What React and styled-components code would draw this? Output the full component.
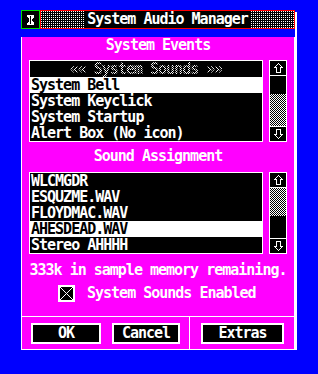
import React from 'react'
import styled, { createGlobalStyle } from 'styled-components'

const GlobalStyle = createGlobalStyle`
  html, body {
    margin: 0;
    padding: 0;
    background: #0000ff;
  }
  body {
    font-family: "DejaVu Sans Mono", "Liberation Mono", monospace;
    font-weight: bold;
    font-size: 15px;
    letter-spacing: -1px;
    color: #fff;
  }
`;

const dots = `
  background-color: #fff;
  background-image:
    linear-gradient(90deg, transparent 1px, #000 1px),
    linear-gradient(transparent 1px, #000 1px);
  background-size: 2px 2px;
`;

const checker = `repeating-conic-gradient(#fff 0 25%, #000 0 50%) 0 0 / 2px 2px`;

const Window = styled.div`
    width: 274px;
    margin: 10px 0 0 21px;
    box-shadow: 2px 2px 0 #fff;
`;

const TitleBar = styled.div`
    display: flex;
    height: 19px;
`;

const CloseBox = styled.div`
    width: 19px;
    box-sizing: border-box;
    border: 1px solid #00e000;
    background: #000;
    display: flex;
    align-items: center;
    justify-content: center;
`;

const TitleBox = styled.div`
    flex: 1;
    box-sizing: border-box;
    border: 1px solid #ff0000;
    ${dots}
    display: flex;
    align-items: center;
    justify-content: center;
`;

const TitleText = styled.span`
    background: #000;
    padding: 0 2px;
    line-height: 17px;
`;

const Body = styled.div`
    background: #ff00ff;
    border: 1px solid #fff;
    border-top: none;
`;

const Content = styled.div`
    padding: 0 7px;
`;

const Heading = styled.div`
    text-align: center;
    line-height: 16px;
    margin-top: ${({ $top }) => $top}px;
`;

const ListRow = styled.div`
    display: flex;
    gap: 6px;
    margin-top: ${({ $top }) => $top}px;
`;

const List = styled.div`
    width: 234px;
    height: 82px;
    box-sizing: border-box;
    border: 1px solid #fff;
    background: #000;
    overflow: hidden;
`;

const Row = styled.div`
    height: 16px;
    line-height: 16px;
    padding-left: 1px;
    white-space: nowrap;
    background: ${({ $selected }) => ($selected ? '#fff' : '#000')};
    color: ${({ $selected }) => ($selected ? '#000' : '#fff')};
`;

const HeaderRow = styled.div`
    height: 16px;
    line-height: 16px;
    text-align: center;
`;

const Stipple = styled.span`
    background: ${checker};
    -webkit-background-clip: text;
    background-clip: text;
    color: transparent;
`;

const Scrollbar = styled.div`
    width: 18px;
    height: 82px;
    box-sizing: border-box;
    border: 1px solid #fff;
    background: #000;
    display: flex;
    flex-direction: column;
`;

const ArrowCell = styled.div`
    height: 15px;
    box-sizing: border-box;
    display: flex;
    align-items: center;
    justify-content: center;
    ${({ $down }) => ($down ? 'border-top: 1px solid #fff;' : 'border-bottom: 1px solid #fff;')}
`;

const Track = styled.div`
    height: ${({ $h }) => $h}px;
    background: ${({ $dither }) => ($dither ? checker : '#000')};
`;

const Info = styled.div`
    text-align: center;
    line-height: 16px;
    margin-top: 8px;
`;

const CheckRow = styled.div`
    display: flex;
    align-items: center;
    gap: 12px;
    margin: 7px 0 0 29px;
    line-height: 17px;
`;

const CheckBox = styled.div`
    width: 17px;
    height: 17px;
    box-sizing: border-box;
    border: 2px solid #fff;
    background: #000;
    display: flex;
`;

const Footer = styled.div`
    display: flex;
    margin-top: 14px;
    border-top: 1px solid #fff;
    height: 32px;
`;

const ButtonGroup = styled.div`
    display: flex;
    gap: 11px;
    padding: 6px 0 0 ${({ $left }) => $left}px;
    box-sizing: border-box;
    ${({ $width }) => ($width ? `width: ${$width}px; border-right: 1px solid #fff;` : 'flex: 1;')}
`;

const Button = styled.div`
    width: ${({ $w }) => $w}px;
    height: 21px;
    box-sizing: border-box;
    border: 2px solid #fff;
    background: #000;
    color: #fff;
    text-align: center;
    line-height: 17px;
`;

function Arrow({ down }) {
    return (
        <svg width="9" height="10" viewBox="0 0 9 10" shapeRendering="crispEdges"
            style={down ? { transform: 'rotate(180deg)' } : undefined}>
            <polygon points="4.5,0.5 8.5,4.5 6.5,4.5 6.5,9.5 2.5,9.5 2.5,4.5 0.5,4.5"
                fill="none" stroke="#fff" strokeWidth="1" />
        </svg>
    );
}

function ScrollBar({ parts }) {
    return (
        <Scrollbar>
            <ArrowCell><Arrow /></ArrowCell>
            {parts.map((p, i) => <Track key={i} $h={p.h} $dither={p.dither} />)}
            <ArrowCell $down><Arrow down /></ArrowCell>
        </Scrollbar>
    );
}

const events = ['System Bell', 'System Keyclick', 'System Startup', 'Alert Box (No icon)'];
const sounds = ['WLCMGDR', 'ESQUZME.WAV', 'FLOYDMAC.WAV', 'AHESDEAD.WAV', 'Stereo AHHHH'];

export default function App() {
    return (
        <>
            <GlobalStyle />
            <Window>
                <TitleBar>
                    <CloseBox>
                        <svg width="7" height="10" viewBox="0 0 7 10" shapeRendering="crispEdges">
                            <polygon points="0,0 7,0 7,2 5,4 5,6 7,8 7,10 0,10 0,8 2,6 2,4 0,2" fill="#fff" />
                            <rect x="3" y="1" width="1" height="8" fill="#000" />
                        </svg>
                    </CloseBox>
                    <TitleBox>
                        <TitleText>System Audio Manager</TitleText>
                    </TitleBox>
                </TitleBar>
                <Body>
                    <Content>
                        <Heading $top={8}>System Events</Heading>
                        <ListRow $top={7}>
                            <List>
                                <HeaderRow><Stipple>«« System Sounds »»</Stipple></HeaderRow>
                                {events.map((e, i) => <Row key={e} $selected={i === 0}>{e}</Row>)}
                            </List>
                            <ScrollBar parts={[{ h: 18 }, { h: 32, dither: true }]} />
                        </ListRow>
                        <Heading $top={6}>Sound Assignment</Heading>
                        <ListRow $top={8}>
                            <List>
                                {sounds.map((s, i) => <Row key={s} $selected={i === 3}>{s}</Row>)}
                            </List>
                            <ScrollBar parts={[{ h: 28, dither: true }, { h: 22 }]} />
                        </ListRow>
                        <Info>333k in sample memory remaining.</Info>
                        <CheckRow>
                            <CheckBox>
                                <svg width="13" height="13" viewBox="0 0 13 13">
                                    <line x1="0" y1="0" x2="13" y2="13" stroke="#fff" strokeWidth="1" />
                                    <line x1="13" y1="0" x2="0" y2="13" stroke="#fff" strokeWidth="1" />
                                </svg>
                            </CheckBox>
                            <span>System Sounds Enabled</span>
                        </CheckRow>
                    </Content>
                    <Footer>
                        <ButtonGroup $width={168} $left={9}>
                            <Button $w={70}>OK</Button>
                            <Button $w={68}>Cancel</Button>
                        </ButtonGroup>
                        <ButtonGroup $left={11}>
                            <Button $w={83}>Extras</Button>
                        </ButtonGroup>
                    </Footer>
                </Body>
            </Window>
        </>
    );
}
